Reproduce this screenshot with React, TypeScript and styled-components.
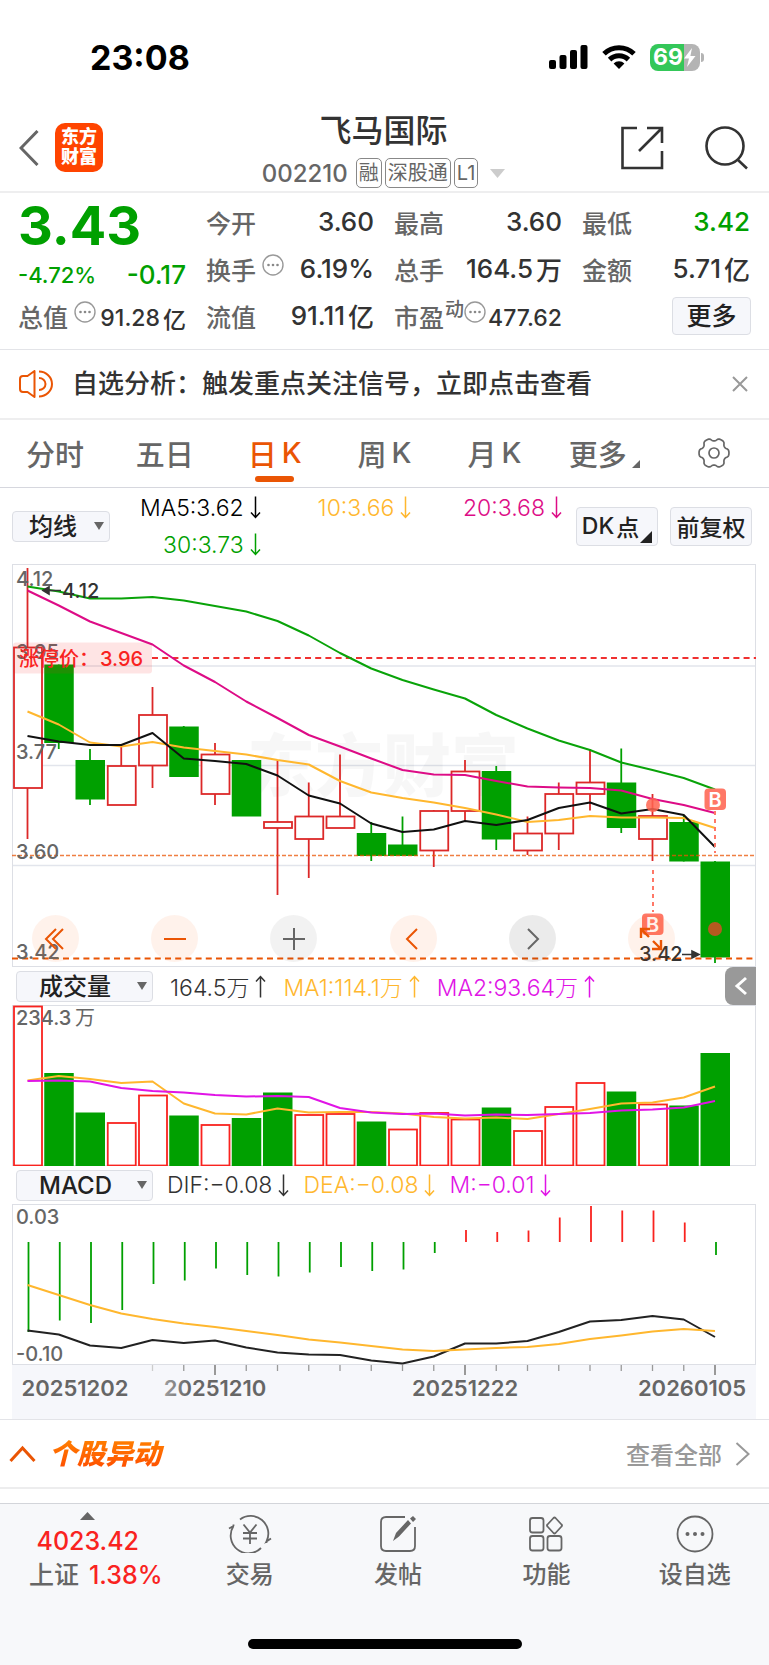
import React from "react";
import styled, { createGlobalStyle, css } from "styled-components";

const C = {
  green: "#00a000",
  red: "#f9231f",
  candleRed: "#dc2828",
  orange: "#ea5504",
  yellow: "#ffb72e",
  pink: "#dd0c86",
  magenta: "#e014e6",
  ink: "#333",
  label: "#666",
  mute: "#999",
  line: "#e3e4e8",
  panel: "#f6f7fb",
};

const FONT = `Inter, "Noto Sans CJK SC", "Liberation Sans", sans-serif`;

const GlobalStyle = createGlobalStyle`
  * { box-sizing: border-box; }
  body { margin: 0; background: #fff; font-family: ${FONT}; color: ${C.ink}; }
  button, select { font-family: inherit; color: inherit; margin: 0; }
  svg { display: block; flex: none; }
`;

/* ---------- shared ---------- */
const Page = styled.div`
  min-height: 100vh;
  display: flex;
  flex-direction: column;
`;
const PlainButton = styled.button`
  border: 0;
  padding: 0;
  background: none;
  cursor: pointer;
  display: flex;
  align-items: center;
`;
const Row = styled.div<{ $gap?: number }>`
  display: flex;
  align-items: center;
  gap: ${(p) => p.$gap ?? 0}px;
`;

/* ---------- status bar ---------- */
const StatusBar = styled.div`
  height: 96px;
  padding: 18px 65px 0 90px;
  display: flex;
  align-items: center;
  justify-content: space-between;
  color: #000;
`;
const Clock = styled.span`
  font-size: 34px;
  font-weight: 700;
`;
const Battery = styled.div`
  width: 50px;
  height: 27px;
  border-radius: 8px;
  background: linear-gradient(90deg, #34c759 0 34px, #b4b4b4 34px);
  color: #fff;
  font-size: 23px;
  font-weight: 700;
  line-height: 26px;
  padding-left: 3px;
  display: flex;
  align-items: center;
`;
const BatteryNub = styled.i`
  width: 3px;
  height: 9px;
  margin-left: 1px;
  border-radius: 0 3px 3px 0;
  background: #b4b4b4;
`;

/* ---------- header ---------- */
const Header = styled.header`
  display: grid;
  grid-template-columns: 1fr auto 1fr;
  align-items: center;
  padding: 15px 21px 3px 19px;
  border-bottom: 2px solid #eeeeef;
`;
const Logo = styled.div`
  width: 48px;
  height: 49px;
  border-radius: 10px;
  background: #ff4400;
  color: #fff;
  font-size: 18px;
  font-weight: 900;
  line-height: 20px;
  text-align: center;
  padding-top: 4px;
`;
const TitleBlock = styled.div`
  display: flex;
  flex-direction: column;
  align-items: center;
  gap: 7px;
`;
const Title = styled.h1`
  margin: 0;
  font-size: 32px;
  line-height: 40px;
  font-weight: 500;
`;
const Code = styled.span`
  font-size: 24px;
  font-weight: 500;
  color: ${C.label};
  margin-right: 5px;
`;
const Tag = styled.span`
  height: 30px;
  padding: 0 2px;
  border: 1px solid #888;
  border-radius: 5px;
  font-size: 20px;
  line-height: 28px;
  color: ${C.label};
`;
const HeaderSide = styled(Row)<{ $end?: boolean }>`
  justify-content: ${(p) => (p.$end ? "flex-end" : "flex-start")};
  padding-bottom: 4px;
`;

/* ---------- quote ---------- */
const Quote = styled.section`
  display: grid;
  grid-template-columns: repeat(4, minmax(0, 1fr));
  grid-auto-rows: 47px;
  column-gap: 20px;
  padding: 5px 19px 10px 18px;
  border-bottom: 1px solid ${C.line};
`;
const Cell = styled.div`
  display: flex;
  align-items: center;
  justify-content: space-between;
  white-space: nowrap;
`;
const Price = styled.strong`
  padding-top: 8px;
  font-size: 54px;
  line-height: 60px;
  font-weight: 700;
  color: ${C.green};
`;
const Change = styled(Cell)`
  padding-top: 12px;
  font-weight: 500;
  color: ${C.green};
  font-size: 26px;
`;
const Small = styled.span`
  font-size: 22px;
`;
const Label = styled.span`
  display: flex;
  align-items: center;
  font-size: 25px;
  font-weight: 500;
  color: ${C.label};
`;
const Sup = styled.span`
  font-size: 19px;
  margin: 0 0 16px 1px;
`;
const HintButton = styled(PlainButton)<{ $tight?: boolean }>`
  margin: 0 0 8px ${(p) => (p.$tight ? 0 : 6)}px;
`;
const Value = styled.span<{ $small?: boolean; $down?: boolean }>`
  display: flex;
  align-items: center;
  gap: 3px;
  font-size: ${(p) => (p.$small ? 23 : 26)}px;
  padding-top: ${(p) => (p.$small ? 4 : 0)}px;
  font-weight: 500;
  color: ${(p) => (p.$down ? C.green : C.ink)};
`;
const boxed = css`
  border: 1px solid #dcdee4;
  border-radius: 4px;
  background: ${C.panel};
  color: #222;
  font-weight: 500;
`;
const MoreButton = styled.button`
  ${boxed}
  width: 79px;
  height: 38px;
  margin: 0 -1px 0 0;
  padding: 0;
  font-size: 25px;
  line-height: 34px;
  cursor: pointer;
`;

/* ---------- notice ---------- */
const Notice = styled.section`
  display: flex;
  align-items: center;
  height: 70px;
  padding: 0 21px 0 19px;
  border-bottom: 2px solid #eeeeef;
`;
const NoticeText = styled.p`
  flex: 1;
  margin: 0 0 0 19px;
  font-size: 26px;
  line-height: 36px;
  font-weight: 500;
  white-space: nowrap;
`;

/* ---------- tabs ---------- */
const Tabs = styled.nav`
  display: grid;
  grid-template-columns: repeat(7, 1fr);
  height: 68px;
  border-bottom: 1px solid #d6d7de;
`;
const Tab = styled(PlainButton)<{ $on?: boolean }>`
  position: relative;
  justify-content: center;
  gap: 5px;
  padding-bottom: 2px;
  font-size: 29px;
  font-weight: 500;
  white-space: nowrap;
  color: ${(p) => (p.$on ? C.orange : C.label)};
  &::after {
    content: "";
    display: ${(p) => (p.$on ? "block" : "none")};
    position: absolute;
    left: calc(50% - 20px);
    bottom: 5px;
    width: 39px;
    height: 6px;
    border-radius: 3px;
    background: ${C.orange};
  }
`;
const Corner = styled.i<{ $size: number; $color: string }>`
  align-self: flex-end;
  border-left: ${(p) => p.$size}px solid transparent;
  border-bottom: ${(p) => p.$size}px solid ${(p) => p.$color};
`;
const TabCorner = styled(Corner)`
  margin-bottom: 17px;
`;

/* ---------- indicators ---------- */
const Charts = styled.main`
  margin: 0 13px 0 12px;
`;
const SelectWrap = styled.label<{ $w: number }>`
  position: relative;
  display: block;
  flex: none;
  width: ${(p) => p.$w}px;
  &::after {
    content: "";
    position: absolute;
    right: 6px;
    top: 11px;
    border: 5px solid transparent;
    border-top: 8px solid ${C.label};
    border-bottom: 0;
    pointer-events: none;
  }
`;
const Select = styled.select<{ $pad: number }>`
  ${boxed}
  display: block;
  appearance: none;
  width: 100%;
  height: 31px;
  padding: 0 0 0 ${(p) => p.$pad}px;
  font-size: 24px;
  line-height: 29px;
`;
const MaBar = styled.div`
  display: flex;
  align-items: center;
  height: 76px;
  padding-right: 4px;
`;
const MaLegend = styled.div`
  flex: 1;
  display: grid;
  grid-template-columns: repeat(3, 1fr);
  grid-auto-rows: 37px;
  margin-right: 14px;
`;
const Reading = styled.span<{ $color: string }>`
  display: flex;
  align-items: center;
  justify-content: flex-end;
  gap: 6px;
  font-size: 23px;
  font-weight: 300;
  white-space: nowrap;
  color: ${(p) => p.$color};
`;
const ToolButton = styled.button`
  ${boxed}
  display: flex;
  align-items: center;
  justify-content: center;
  gap: 2px;
  width: 82px;
  height: 39px;
  padding: 0;
  margin-left: 12px;
  font-size: 23px;
  white-space: nowrap;
  cursor: pointer;
  &:first-of-type { margin-left: 0; }
`;
const ToolCorner = styled(Corner)`
  margin: 0 0 2px -1px;
`;
const SubBar = styled.div<{ $gap: number }>`
  display: flex;
  align-items: center;
  gap: ${(p) => p.$gap}px;
  height: 38px;
  padding-left: 4px;
`;
const CollapseButton = styled(PlainButton)`
  margin-left: auto;
  width: 31px;
  height: 38px;
  justify-content: center;
  border-radius: 8px 0 0 8px;
  background: ${C.mute};
`;
const ChartBox = styled.div`
  position: relative;
`;
const Plot = styled.svg`
  width: 100%;
  height: auto;
  font-family: ${FONT};
`;
const Overlay = styled.div`
  position: absolute;
  left: 0;
  right: 0;
  bottom: 5px;
  padding: 0 81px 0 20px;
  display: flex;
  justify-content: space-between;
`;
const RoundButton = styled(PlainButton)<{ $tone: "warm" | "grey" | "dark" }>`
  width: 47px;
  height: 47px;
  border-radius: 50%;
  justify-content: center;
  background: ${(p) =>
    p.$tone === "warm" ? "rgba(255,85,0,.08)" : p.$tone === "grey" ? "rgba(0,0,0,.05)" : "rgba(0,0,0,.08)"};
`;

/* ---------- movers ---------- */
const Movers = styled.section`
  display: flex;
  align-items: center;
  height: 70px;
  padding: 0 19px 0 9px;
  border-top: 1px solid ${C.line};
  border-bottom: 2px solid #ededee;
`;
const MoversTitle = styled.h2`
  flex: 1;
  margin: 0 0 0 13px;
  font-size: 28px;
  font-weight: 900;
  font-style: italic;
  line-height: 40px;
  span {
    background: linear-gradient(#ff8400, #ff4a00);
    -webkit-background-clip: text;
    background-clip: text;
    color: transparent;
    padding-right: 4px;
  }
`;
const AllLink = styled.a`
  display: flex;
  align-items: center;
  gap: 13px;
  font-size: 24px;
  font-weight: 500;
  color: ${C.mute};
  text-decoration: none;
`;

/* ---------- bottom bar ---------- */
const Bottom = styled.footer`
  flex: 1;
  margin-top: 14px;
  border-top: 1px solid #d3d5da;
  background: #f7f8fa;
  display: flex;
  flex-direction: column;
  justify-content: space-between;
`;
const BottomNav = styled.nav`
  display: grid;
  align-items: start;
  grid-template-columns: 175fr repeat(4, 148fr);
`;
const IndexButton = styled(PlainButton)`
  flex-direction: column;
  padding-top: 8px;
  font-size: 25px;
  font-weight: 500;
  color: ${C.red};
`;
const IndexValue = styled.span`
  margin-top: 4px;
  line-height: 34px;
`;
const IndexLine = styled.span`
  display: flex;
  gap: 10px;
  padding-left: 16px;
  line-height: 34px;
`;
const IndexName = styled.span`
  color: ${C.label};
`;
const NavButton = styled(PlainButton)`
  flex-direction: column;
  gap: 4px;
  padding-top: 11px;
  font-size: 24px;
  font-weight: 500;
  line-height: 36px;
  color: ${C.label};
`;
const HomeBar = styled.div`
  align-self: center;
  width: 274px;
  height: 10px;
  margin: 30px 0 16px;
  border-radius: 5px;
  background: #000;
`;

/* ---------- icons ---------- */
const Stroke = ({ w, h, d, color, sw = 2 }: { w: number; h: number; d: string; color: string; sw?: number }) => (
  <svg width={w} height={h} viewBox={`0 0 ${w} ${h}`} fill="none" stroke={color} strokeWidth={sw}>
    <path d={d} />
  </svg>
);

const Dots = () => (
  <svg width="22" height="22" viewBox="0 0 22 22">
    <circle cx="11" cy="11" r="10" fill="none" stroke="#999" strokeWidth="1.4" />
    <circle cx="6.5" cy="11" r="1.3" fill="#888" />
    <circle cx="11" cy="11" r="1.3" fill="#888" />
    <circle cx="15.5" cy="11" r="1.3" fill="#888" />
  </svg>
);

const Arrow = ({ up }: { up?: boolean }) => (
  <svg width="11" height="23" viewBox="0 0 11 23" fill="none" stroke="currentColor" strokeWidth="1.5">
    <path d={up ? "M5.5 22.5V1.5M1 6.5L5.5 1.5L10 6.5" : "M5.5 .5V21.5M1 16.5L5.5 21.5L10 16.5"} />
  </svg>
);

const gearPath = (() => {
  const pts: string[] = [];
  for (let a = 0; a < 360; a += 3) {
    const t = (a * Math.PI) / 180;
    const r = 13.4 + 1.6 * Math.tanh(1.6 * Math.cos(6 * t) + 0.5);
    pts.push(`${(16 + r * Math.cos(t)).toFixed(2)} ${(16 + r * Math.sin(t)).toFixed(2)}`);
  }
  return `M${pts.join("L")}Z`;
})();

const Gear = () => (
  <svg width="32" height="32" viewBox="0 0 32 32" fill="none" stroke="#666" strokeWidth="1.7">
    <path d={gearPath} strokeLinejoin="round" />
    <circle cx="16" cy="16" r="5" />
  </svg>
);

/* ---------- chart data ---------- */
const X0 = 27.5;
const STEP = 31.25;
const cx = (i: number) => X0 + STEP * i;

type Candle = [up: 0 | 1, top: number, bottom: number, high: number, low: number];
const candles: Candle[] = [
  [1, 647, 788, 568, 839], [0, 664.5, 742.5, 664.5, 749], [0, 760, 799, 749, 805], [1, 765.5, 805, 744, 805],
  [1, 714.5, 765.5, 687, 788], [0, 726.5, 776.5, 726, 777], [1, 754, 794, 743, 805], [0, 760, 816, 760, 816],
  [1, 821.5, 828, 760.5, 895], [1, 816, 839, 782.5, 878], [1, 816, 828, 754.5, 828], [0, 833, 855.5, 822, 861],
  [0, 844.5, 855.5, 816.5, 855], [1, 810.5, 850.5, 810, 867], [1, 771, 811, 760, 821], [0, 771, 839, 766, 850],
  [1, 833, 850.5, 816.5, 855], [1, 793.5, 833.5, 782.5, 850], [1, 782, 794, 749, 810.5], [0, 782.5, 827.5, 748.5, 833],
  [1, 815.5, 839, 794, 861], [0, 822, 861, 815, 861.5], [0, 861.5, 957, 861, 963],
];
const ma5 = [736, 741.5, 745, 745, 733, 758.5, 761, 764, 775.5, 795.5, 803.5, 823.5, 832, 829.5, 821, 825, 820, 808, 802.5, 813.5, 809, 815, 847];
const ma10 = [711.5, 724.5, 742.5, 746.5, 742, 747.5, 751, 754.5, 760, 764.5, 781, 792.5, 798, 802.5, 808, 814.5, 822, 820, 816, 817.5, 817.5, 818, 828];
const ma20 = [590.5, 605.5, 621.5, 633, 644.5, 665.5, 682, 701.5, 718, 735, 746.5, 758.5, 770, 774.5, 775, 781, 786.5, 787.5, 788, 790.5, 799, 805, 813];
const ma30 = [586.5, 591.5, 598.5, 598.5, 597, 600.5, 606, 611.5, 621, 635.5, 653, 668.5, 680, 689.5, 698.5, 715, 728.5, 740.5, 750, 762.5, 770, 778, 789.5];
const volume = [1006, 1073, 1112.5, 1122.5, 1095, 1115.5, 1124.5, 1118, 1092.5, 1114.5, 1113.5, 1121.5, 1129, 1112.5, 1119, 1107.5, 1130.5, 1106.5, 1082.5, 1091.5, 1104, 1105.5, 1053];
const volumeUp = [1, 0, 0, 1, 1, 0, 1, 0, 0, 1, 1, 0, 1, 1, 1, 0, 1, 1, 1, 0, 1, 0, 0];
const vma1 = [1080.5, 1076, 1079, 1083, 1081.5, 1103.5, 1113.5, 1114.5, 1108.5, 1112.5, 1112, 1112, 1113.5, 1117, 1118.5, 1117.5, 1119, 1114, 1109, 1103.5, 1102.5, 1097.5, 1086.5];
const vma2 = [1081, 1080.5, 1081.5, 1088, 1091, 1092.5, 1095, 1096.5, 1096, 1097, 1108, 1112.5, 1114, 1113.5, 1115.5, 1114.5, 1115, 1114, 1113, 1110.5, 1109.5, 1107.5, 1101];
const hist = [1332, 1320.5, 1323, 1310, 1284, 1280.5, 1268.5, 1275, 1276.5, 1272.5, 1267, 1271, 1269.5, 1253, 1230, 1232, 1230.5, 1217.5, 1206, 1210.5, 1210.5, 1222.5, 1255];
const dif = [1330.5, 1334.5, 1345.5, 1348, 1340, 1343, 1340.5, 1347.5, 1352.5, 1354.5, 1355, 1360.5, 1363.5, 1356.5, 1343.5, 1343.5, 1341, 1332, 1321.5, 1320, 1316, 1319.5, 1337];
const dea = [1285, 1295, 1305, 1313.5, 1319, 1323.5, 1327, 1331, 1335, 1339.5, 1342.5, 1346, 1349.5, 1351, 1349.5, 1348, 1347, 1344, 1339, 1335.5, 1331.5, 1329, 1331];

const Line = ({ ys, color, w = 2 }: { ys: number[]; color: string; w?: number }) => (
  <polyline points={ys.map((y, i) => `${cx(i)},${y}`).join(" ")} fill="none" stroke={color} strokeWidth={w} strokeLinejoin="round" />
);

const Bar = ({ i, top, bottom, up, color }: { i: number; top: number; bottom: number; up: boolean; color: string }) =>
  up ? (
    <rect x={cx(i) - 13.5} y={top + 0.5} width={28} height={bottom - top - 0.5} fill="#fff" stroke={color} strokeWidth="1.8" />
  ) : (
    <rect x={cx(i) - 14.5} y={top} width={29.5} height={bottom - top + 0.5} fill={C.green} />
  );

const Badge = ({ x, y }: { x: number; y: number }) => (
  <g>
    <rect x={x - 10.5} y={y - 10.5} width="21.5" height="21.5" rx="4" fill="#ff7867" />
    <text x={x} y={y + 7.5} fontSize="20" fontWeight="600" fill="#fff" textAnchor="middle">B</text>
  </g>
);

const PriceChart = () => (
  <Plot viewBox="12 564 744 403" role="img" aria-label="日K">
    <g stroke="#e2e5ec" strokeWidth="1.3">
      <path d="M12 666H756M12 765.5H756M12 865.5H756" />
    </g>
    <text x="247" y="791" fontSize="68" fontWeight="900" fill="#000" fillOpacity=".03">东方财富</text>
    <rect x="12.5" y="564.5" width="743" height="402" fill="none" stroke="#dddfe5" />
    {candles.map(([up, top, bottom, high, low], i) => (
      <g key={i}>
        <path d={`M${cx(i)} ${high}V${low}`} stroke={up ? C.candleRed : C.green} strokeWidth="1.8" />
        <Bar i={i} top={top} bottom={bottom} up={!!up} color={C.candleRed} />
      </g>
    ))}
    <path d="M12 855.5H756" stroke={C.orange} strokeWidth="1.5" strokeDasharray="4 2" opacity=".75" />
    <path d="M12 958.5H756" stroke={C.orange} strokeWidth="2" strokeDasharray="6 4.2" />
    <path d="M152 658H756" stroke="#f03030" strokeWidth="2" strokeDasharray="6 4.2" />
    <g fontSize="20" fontWeight="500" fill="#666">
      <text x="16" y="586">4.12</text>
      <text x="16" y="659">3.95</text>
      <text x="16" y="759">3.77</text>
      <text x="16" y="859">3.60</text>
      <text x="16" y="959">3.42</text>
    </g>
    <rect x="13" y="642.5" width="139" height="31" rx="3" fill="#f9231f" fillOpacity=".12" />
    <g fontSize="20" fontWeight="500" fill={C.red}>
      <text x="19" y="665.5">涨停价：</text>
      <text x="100" y="665.5">3.96</text>
    </g>
    <Line ys={ma30} color="#09a309" />
    <Line ys={ma20} color={C.pink} />
    <Line ys={ma10} color={C.yellow} />
    <Line ys={ma5} color="#111" />
    <g fontSize="20" fill={C.ink} fontWeight="500">
      <text x="62" y="598">4.12</text>
      <text x="639" y="961">3.42</text>
    </g>
    <path d="M43 590.5L49 587V594ZM49 590.5H61" fill={C.ink} stroke={C.ink} strokeWidth="1.6" />
    <path d="M699 954.5L692 951V958ZM692 954.5H682" fill={C.ink} stroke={C.ink} strokeWidth="1.6" />
    <path d="M715 811V853M653 870V912" stroke="#ff7867" strokeWidth="2" strokeDasharray="4 4" />
    <circle cx="653" cy="805" r="7" fill="#ff6450" fillOpacity=".85" />
    <circle cx="715" cy="929" r="7" fill="#b45a20" />
    <Badge x={715} y={799} />
    <Badge x={652.5} y={924} />
  </Plot>
);

const VolumeChart = () => (
  <Plot viewBox="12 1005 744 161" role="img" aria-label="成交量">
    <rect x="12.5" y="1005.5" width="743" height="160" fill="none" stroke="#dddfe5" />
    {volume.map((v, i) => (
      <Bar key={i} i={i} top={v} bottom={1165.5} up={!!volumeUp[i]} color={C.red} />
    ))}
    <Line ys={vma1} color={C.yellow} />
    <Line ys={vma2} color={C.magenta} />
    <g fontSize="20" fill="#666">
      <text x="16" y="1025" fontWeight="500">234.3</text>
      <text x="75" y="1025">万</text>
    </g>
  </Plot>
);

const dates: [number, string][] = [[75, "20251202"], [215, "20251210"], [465, "20251222"], [692, "20260105"]];

const MacdChart = () => (
  <Plot viewBox="12 1204 744 215" role="img" aria-label="MACD">
    <defs>
      <linearGradient id="fade" gradientUnits="userSpaceOnUse" x1="150" x2="190" y1="0" y2="0">
        <stop offset="0" stopColor="#bbb" />
        <stop offset="1" stopColor="#666" />
      </linearGradient>
    </defs>
    <rect x="12" y="1365" width="744" height="54" fill={C.panel} />
    <rect x="12.5" y="1204.5" width="743" height="160" fill="none" stroke="#dddfe5" />
    {hist.map((y, i) => (
      <path key={i} d={`M${cx(i) + 1} 1242V${y}`} stroke={y > 1242 ? C.green : C.red} strokeWidth="1.8" />
    ))}
    <Line ys={dif} color="#222" />
    <Line ys={dea} color={C.yellow} />
    {hist.map((_, i) => {
      const major = i % 8 === 6;
      return i < 4 ? null : (
        <path key={i} d={`M${cx(i)} 1365V${major ? 1375 : 1371}`} stroke={i === 4 ? "#ccc" : "#999"} strokeWidth={major ? 2 : 1.3} />
      );
    })}
    <g fontSize="20" fontWeight="500" fill="#666">
      <text x="16" y="1224">0.03</text>
      <text x="16" y="1361">-0.10</text>
    </g>
    <g fontSize="22" fontWeight="600" textAnchor="middle">
      {dates.map(([x, d]) => (
        <text key={d} x={x} y="1396" fill={x === 215 ? "url(#fade)" : "#666"}>{d}</text>
      ))}
    </g>
  </Plot>
);

const IndicatorSelect = ({ name, w, pad }: { name: string; w: number; pad: number }) => (
  <SelectWrap $w={w}>
    <Select $pad={pad} aria-label={name} defaultValue={name}>
      <option>{name}</option>
    </Select>
  </SelectWrap>
);

const Hint = ({ tight }: { tight?: boolean }) => (
  <HintButton aria-label="说明" $tight={tight}>
    <Dots />
  </HintButton>
);

type StatProps = { label: string; value: string; unit?: string; hint?: boolean; sup?: string; small?: boolean; down?: boolean };
const Stat = ({ label, value, unit, hint, sup, small, down }: StatProps) => (
  <Cell>
    <Label>
      {label}
      {sup && <Sup>{sup}</Sup>}
      {hint && <Hint tight={!!sup} />}
    </Label>
    <Value $small={small} $down={down}>
      {value}
      {unit && <span>{unit}</span>}
    </Value>
  </Cell>
);

const Read = ({ text, color, up }: { text: string; color: string; up?: boolean }) => (
  <Reading $color={color}>
    {text}
    <Arrow up={up} />
  </Reading>
);

export default function App() {
  return (
    <Page>
      <GlobalStyle />
      <StatusBar>
        <Clock>23:08</Clock>
        <Row $gap={14}>
          <svg width="39" height="24" viewBox="0 0 39 24">
            <rect x="0" y="15" width="7" height="9" rx="2" />
            <rect x="10.5" y="10" width="7" height="14" rx="2" />
            <rect x="21" y="5" width="7" height="19" rx="2" />
            <rect x="31.5" y="0" width="7" height="24" rx="2" />
          </svg>
          <svg width="34" height="24" viewBox="0 0 34 24" fill="none" stroke="#000" strokeWidth="5">
            <path d="M2 8.8A21.5 21.5 0 0 1 32 8.8" />
            <path d="M7.6 14.6A13.4 13.4 0 0 1 26.4 14.6" />
            <path d="M17 24L11.6 18.6A7.6 7.6 0 0 1 22.4 18.6Z" fill="#000" stroke="none" />
          </svg>
          <Row>
            <Battery>
              69
              <svg width="13" height="19" viewBox="0 0 13 19" fill="#fff">
                <path d="M9 0L1 10.5H6L4 19L12.5 8H7.4Z" />
              </svg>
            </Battery>
            <BatteryNub />
          </Row>
        </Row>
      </StatusBar>

      <Header>
        <HeaderSide $gap={16}>
          <PlainButton aria-label="返回">
            <Stroke w={20} h={36} d="M18.5 1L2 18L18.5 35" color="#666" sw={3} />
          </PlainButton>
          <Logo>东方<br />财富</Logo>
        </HeaderSide>
        <TitleBlock>
          <Title>飞马国际</Title>
          <Row $gap={3}>
            <Code>002210</Code>
            <Tag>融</Tag>
            <Tag>深股通</Tag>
            <Tag>L1</Tag>
            <svg width="24" height="9" viewBox="0 0 24 9"><path d="M9 0H24L16.5 9Z" fill="#ccc" /></svg>
          </Row>
        </TitleBlock>
        <HeaderSide $gap={40} $end>
          <PlainButton aria-label="分享">
            <Stroke w={44} h={44} d="M17 2H2.5V42H42V25M27 2H42V17M42 2L19 25" color="#333" sw={2.6} />
          </PlainButton>
          <PlainButton aria-label="搜索">
            <svg width="44" height="44" viewBox="0 0 44 44" fill="none" stroke="#333" strokeWidth="2.6">
              <circle cx="21" cy="20" r="18.5" />
              <path d="M33.5 33.5L43 42.5" />
            </svg>
          </PlainButton>
        </HeaderSide>
      </Header>

      <Quote>
        <Cell><Price>3.43</Price></Cell>
        <Stat label="今开" value="3.60" />
        <Stat label="最高" value="3.60" />
        <Stat label="最低" value="3.42" down />
        <Change><Small>-4.72%</Small><span>-0.17</span></Change>
        <Stat label="换手" value="6.19%" hint />
        <Stat label="总手" value="164.5" unit="万" />
        <Stat label="金额" value="5.71" unit="亿" />
        <Stat label="总值" value="91.28" unit="亿" hint small />
        <Stat label="流值" value="91.11" unit="亿" />
        <Stat label="市盈" sup="动" value="477.62" hint small />
        <Cell><span /><MoreButton>更多</MoreButton></Cell>
      </Quote>

      <Notice>
        <svg width="34" height="28" viewBox="0 0 34 28" fill="none" stroke={C.orange} strokeWidth="2" strokeLinejoin="round">
          <path d="M15.5 1V27L8.5 22H4Q1 22 1 19V9Q1 6 4 6H8.5Z" />
          <path d="M20 1.5A13 12.5 0 0 1 20 26.5M20 8A6.5 6 0 0 1 20 20" />
        </svg>
        <NoticeText>自选分析：触发重点关注信号，立即点击查看</NoticeText>
        <PlainButton aria-label="关闭">
          <Stroke w={16} h={16} d="M1 1L15 15M15 1L1 15" color="#999" />
        </PlainButton>
      </Notice>

      <Tabs>
        <Tab>分时</Tab>
        <Tab>五日</Tab>
        <Tab $on aria-current="page">日<span>K</span></Tab>
        <Tab>周<span>K</span></Tab>
        <Tab>月<span>K</span></Tab>
        <Tab>更多<TabCorner $size={8} $color="#666" /></Tab>
        <Tab aria-label="设置"><Gear /></Tab>
      </Tabs>

      <Charts>
        <MaBar>
          <IndicatorSelect name="均线" w={98} pad={16} />
          <MaLegend>
            <Read text="MA5:3.62" color="#000" />
            <Read text="10:3.66" color={C.yellow} />
            <Read text="20:3.68" color={C.pink} />
            <Read text="30:3.73" color={C.green} />
          </MaLegend>
          <ToolButton>DK<span>点</span><ToolCorner $size={12} $color="#222" /></ToolButton>
          <ToolButton>前复权</ToolButton>
        </MaBar>

        <ChartBox>
          <PriceChart />
          <Overlay>
            <RoundButton $tone="warm" aria-label="最早">
              <Stroke w={26} h={22} d="M13 1L3 11L13 21M20 1L10 11L20 21" color={C.orange} />
            </RoundButton>
            <RoundButton $tone="warm" aria-label="缩小">
              <Stroke w={24} h={24} d="M1 12H23" color={C.orange} />
            </RoundButton>
            <RoundButton $tone="grey" aria-label="放大">
              <Stroke w={24} h={24} d="M1 12H23M12 1V23" color="#666" />
            </RoundButton>
            <RoundButton $tone="warm" aria-label="向左">
              <Stroke w={24} h={24} d="M16 2L6 12L16 22" color={C.orange} />
            </RoundButton>
            <RoundButton $tone="dark" aria-label="向右">
              <Stroke w={24} h={24} d="M8 2L18 12L8 22" color="#666" />
            </RoundButton>
            <RoundButton $tone="warm" aria-label="全屏">
              <Stroke w={24} h={24} d="M2 11V2H11M2 2L10 10M22 13V22H13M22 22L14 14" color={C.orange} sw={2.4} />
            </RoundButton>
          </Overlay>
        </ChartBox>

        <SubBar $gap={17}>
          <IndicatorSelect name="成交量" w={137} pad={22} />
          <Read text="164.5万" color="#333" up />
          <Read text="MA1:114.1万" color={C.yellow} up />
          <Read text="MA2:93.64万" color={C.magenta} up />
          <CollapseButton aria-label="展开">
            <Stroke w={14} h={20} d="M12 2L3 10L12 18" color="#fff" sw={3} />
          </CollapseButton>
        </SubBar>
        <VolumeChart />

        <SubBar $gap={14}>
          <IndicatorSelect name="MACD" w={137} pad={22} />
          <Read text="DIF:−0.08" color="#333" />
          <Read text="DEA:−0.08" color={C.yellow} />
          <Read text="M:−0.01" color={C.magenta} />
        </SubBar>
        <MacdChart />
      </Charts>

      <Movers>
        <Stroke w={27} h={18} d="M1.5 16L13.5 3L25.5 16" color={C.orange} sw={3} />
        <MoversTitle><span>个股异动</span></MoversTitle>
        <AllLink href="#all">
          查看全部
          <Stroke w={15} h={24} d="M1.5 1L13.5 12L1.5 23" color="#999" />
        </AllLink>
      </Movers>

      <Bottom>
        <BottomNav>
          <IndexButton>
            <svg width="15" height="8" viewBox="0 0 15 8"><path d="M7.5 0L15 8H0Z" fill="#666" /></svg>
            <IndexValue>4023.42</IndexValue>
            <IndexLine><IndexName>上证</IndexName>1.38%</IndexLine>
          </IndexButton>
          <NavButton>
            <svg width="44" height="38" viewBox="0 0 44 38" fill="none" stroke="#666" strokeWidth="1.8">
              <path d="M12 4.5A17.7 17.7 0 0 1 38.5 26.5L43 23.5M38.5 26.5V28" />
              <path d="M33 33A17.7 17.7 0 0 1 5.5 11L1 13.5M5.5 11V9.5" />
              <path d="M15.5 9.5L22 17.5L28.5 9.5M22 17.5V29M15 18H29M15 23.5H29" />
            </svg>
            交易
          </NavButton>
          <NavButton>
            <svg width="38" height="38" viewBox="0 0 38 38" fill="none" stroke="#666" strokeWidth="1.8">
              <path d="M26 2H7Q2 2 2 7V31Q2 36 7 36H31Q36 36 36 31V12" />
              <path d="M14 26L17 18L29 5L32 8.5L20 21.5ZM31 3.5L34 1L37 4L34 7Z" fill="#666" stroke="none" />
            </svg>
            发帖
          </NavButton>
          <NavButton>
            <svg width="38" height="38" viewBox="0 0 38 38" fill="none" stroke="#666" strokeWidth="1.8">
              <rect x="3" y="3" width="13.5" height="14.5" rx="2.5" />
              <rect x="3" y="21" width="13.5" height="14.5" rx="2.5" />
              <rect x="20.5" y="21" width="14" height="14.5" rx="2.5" />
              <path d="M26.5 3Q27.5 2 28.5 3L34.5 9.5Q35.5 10.5 34.5 11.5L28.5 18Q27.5 19 26.5 18L20.5 11.5Q19.5 10.5 20.5 9.5Z" />
            </svg>
            功能
          </NavButton>
          <NavButton>
            <svg width="38" height="38" viewBox="0 0 38 38">
              <circle cx="19" cy="19" r="17.5" fill="none" stroke="#666" strokeWidth="1.8" />
              <circle cx="11.5" cy="19" r="2" fill="#666" />
              <circle cx="19" cy="19" r="2" fill="#666" />
              <circle cx="26.5" cy="19" r="2" fill="#666" />
            </svg>
            设自选
          </NavButton>
        </BottomNav>
        <HomeBar />
      </Bottom>
    </Page>
  );
}
